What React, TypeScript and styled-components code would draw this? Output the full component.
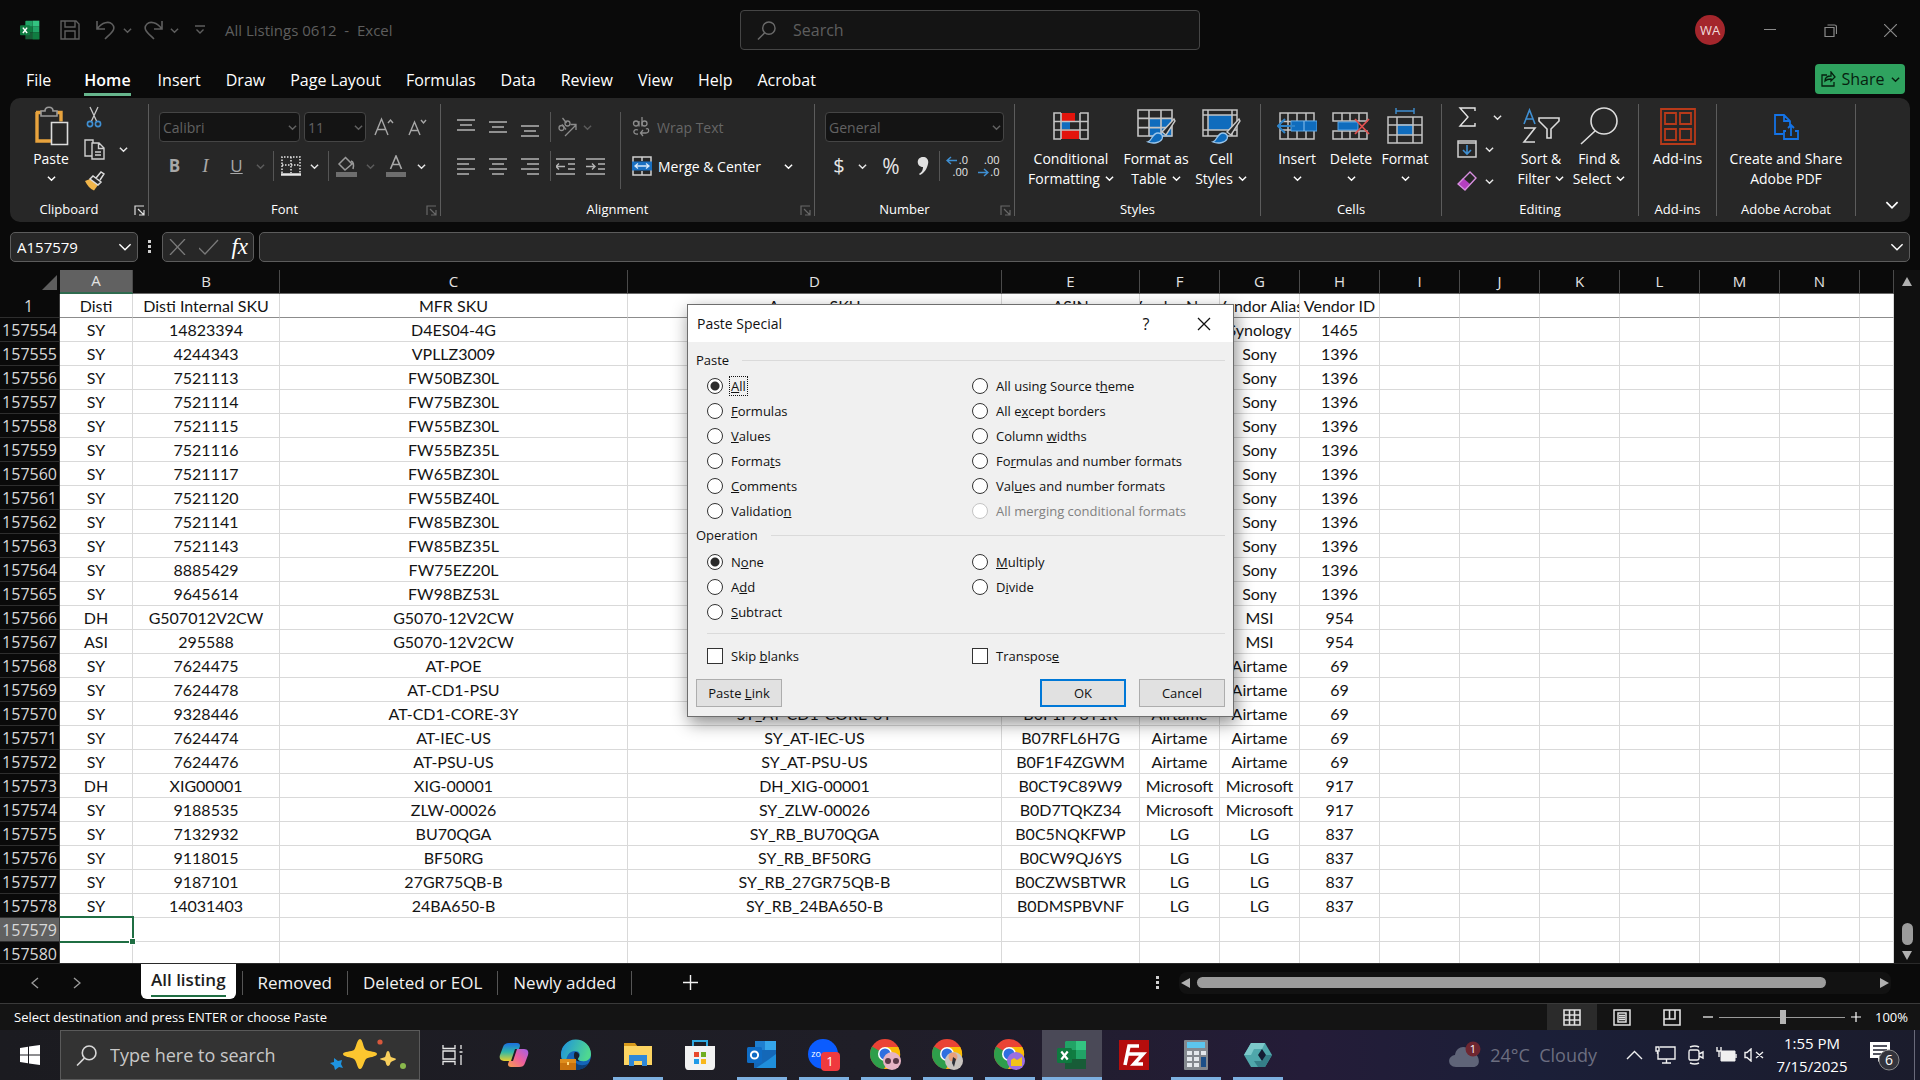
import React from "react";
import styled, { createGlobalStyle, css } from "styled-components";

const ui = '"Open Sans", "Noto Sans", sans-serif';

const GlobalStyle = createGlobalStyle`
  *, *::before, *::after { box-sizing: border-box; }
  body { margin: 0; background: #0a0a0a; font-family: ${ui}; color: #fff; overflow: hidden; }
  button, input, select { font: inherit; color: inherit; margin: 0; }
  button { background: none; border: 0; padding: 0; cursor: default; }
  svg { display: block; flex: none; }
`;

const Window = styled.div`
  display: flex;
  flex-direction: column;
  height: 100vh;
  background: #0a0a0a;
`;

/* ---------- title bar ---------- */
const TitleBar = styled.header`
  display: grid;
  grid-template-columns: 1fr 460px 1fr;
  gap: 20px;
  align-items: center;
  height: 60px;
  padding: 0 0 0 20px;
  color: #5e5e5e;
`;
const QuickAccess = styled.div`
  display: flex;
  align-items: center;
`;
const QuickButton = styled.button<{ $w: number }>`
  display: flex;
  align-items: center;
  justify-content: center;
  width: ${(p) => p.$w}px;
  height: 30px;
`;
const DocTitle = styled.h1`
  margin: 0 0 0 11px;
  font-size: 15px;
  line-height: 24px;
  font-weight: 400;
  white-space: pre;
`;
const SearchBox = styled.label`
  display: flex;
  align-items: center;
  gap: 15px;
  height: 40px;
  padding: 0 16px;
  border: 1px solid #454545;
  border-radius: 4px;
  background: #141414;
`;
const SearchInput = styled.input`
  flex: 1;
  min-width: 0;
  border: 0;
  outline: 0;
  background: none;
  font-size: 16px;
  &::placeholder { color: #5e5e5e; opacity: 1; }
`;
const WindowControls = styled.div`
  display: flex;
  align-items: center;
  justify-content: flex-end;
`;
const Avatar = styled.button`
  width: 30px;
  height: 30px;
  margin-right: 15px;
  border-radius: 50%;
  background: #a4262c;
  color: #f0dcdc;
  font-size: 13px;
`;
const ControlButton = styled.button`
  display: flex;
  align-items: center;
  justify-content: center;
  width: 60px;
  height: 40px;
`;

/* ---------- ribbon tabs ---------- */
const TabRow = styled.nav`
  display: flex;
  align-items: flex-start;
  height: 38px;
  padding: 4px 15px 0 14px;
`;
const RibbonTab = styled.button<{ $active?: boolean }>`
  height: 32px;
  padding: 0 13px 0 12px;
  font-size: 16px;
  line-height: 32px;
  ${(p) =>
    p.$active &&
    css`
      margin: 0 2px 0 8px;
      font-weight: 600;
    `}
  span {
    display: block;
    height: 32px;
    border-bottom: 3px solid ${(p) => (p.$active ? "#66b58c" : "transparent")};
  }
`;
const ShareButton = styled.button`
  display: flex;
  align-items: center;
  justify-content: center;
  gap: 6px;
  width: 90px;
  height: 30px;
  margin-left: auto;
  border-radius: 4px;
  background: #2fa35f;
  color: #06210f;
  font-size: 16px;
`;

/* ---------- ribbon ---------- */
const Ribbon = styled.section`
  display: flex;
  height: 124px;
  margin: 0 10px;
  border-radius: 10px;
  background: #272727;
`;
const Group = styled.div<{ $w: number }>`
  display: flex;
  flex-direction: column;
  flex: none;
  position: relative;
  width: ${(p) => p.$w}px;
  padding-bottom: 5px;
`;
const GroupBody = styled.div<{ $pad: number }>`
  display: flex;
  align-items: flex-start;
  flex: 1;
  padding-left: ${(p) => p.$pad}px;
`;
const GroupLabel = styled.div<{ $launch?: boolean }>`
  display: flex;
  align-items: center;
  justify-content: center;
  height: 16px;
  padding-right: ${(p) => (p.$launch ? 20 : 0)}px;
  font-size: 13px;
  line-height: 16px;
`;
const Launcher = styled.button<{ $dim?: boolean }>`
  position: absolute;
  right: 3px;
  bottom: 6px;
  color: ${(p) => (p.$dim ? "#686868" : "#e0e0e0")};
`;
const GroupRule = styled.div`
  flex: none;
  width: 1px;
  margin: 6px 0;
  background: #5c5c5c;
`;
const RibbonEnd = styled.div`
  display: flex;
  flex: 1;
  align-items: flex-end;
  justify-content: flex-end;
  padding: 0 11px 10px 0;
`;
const Stack = styled.div<{ $w?: number; $top: number; $gap?: number }>`
  display: flex;
  flex-direction: column;
  flex: none;
  width: ${(p) => (p.$w ? p.$w + "px" : "auto")};
  padding-top: ${(p) => p.$top}px;
  gap: ${(p) => p.$gap ?? 0}px;
`;
const ToolRow = styled.div<{ $h?: number }>`
  display: flex;
  align-items: center;
  height: ${(p) => p.$h ?? 30}px;
`;
const Tool = styled.button<{ $w: number; $dim?: boolean; $bright?: boolean }>`
  display: flex;
  align-items: center;
  justify-content: center;
  flex: none;
  width: ${(p) => p.$w}px;
  height: 28px;
  color: ${(p) => (p.$dim ? "#5c5c5c" : p.$bright ? "#e6e6e6" : "#a8a8a8")};
`;
const Rule = styled.div<{ $h?: number }>`
  flex: none;
  align-self: center;
  width: 1px;
  height: ${(p) => p.$h ?? 30}px;
  margin: 0 4px;
  background: #555;
`;
const TallRule = styled(Rule)`
  align-self: flex-start;
  margin-top: 14px;
`;
const SelectShell = styled.div<{ $w: number }>`
  display: grid;
  align-items: center;
  flex: none;
  width: ${(p) => p.$w}px;
  height: 30px;
  margin-right: 4px;
  color: #626262;
  > * { grid-area: 1 / 1; }
  > svg { justify-self: end; margin-right: 3px; pointer-events: none; }
`;
const RibbonSelect = styled.select`
  appearance: none;
  width: 100%;
  height: 30px;
  padding: 0 3px;
  border: 1px solid #454545;
  border-radius: 4px;
  background: #141414;
  font-size: 14px;
  color: #626262;
`;
const BigButton = styled.button<{ $w: number }>`
  display: flex;
  flex-direction: column;
  align-items: center;
  flex: none;
  width: ${(p) => p.$w}px;
  padding-top: 8px;
  font-size: 14px;
  line-height: 20px;
  white-space: nowrap;
`;
const BigIcon = styled.span`
  display: flex;
  align-items: center;
  justify-content: center;
  height: 40px;
  margin-bottom: 3px;
`;
const BigLine = styled.span`
  display: flex;
  align-items: center;
  gap: 5px;
  height: 20px;
  svg { margin-bottom: 2px; }
`;
const LabelTool = styled.button<{ $dim?: boolean }>`
  display: flex;
  align-items: center;
  gap: 6px;
  width: 168px;
  height: 30px;
  padding-left: 7px;
  font-size: 14px;
  color: ${(p) => (p.$dim ? "#666" : "#fff")};
  span { flex: 1; text-align: left; }
`;
const Glyph = styled.span<{ $size: number; $serif?: boolean; $bold?: boolean; $italic?: boolean }>`
  font-family: ${(p) => (p.$serif ? '"Liberation Serif", serif' : ui)};
  font-size: ${(p) => p.$size}px;
  line-height: 24px;
  font-weight: ${(p) => (p.$bold ? 700 : 400)};
  font-style: ${(p) => (p.$italic ? "italic" : "normal")};
`;

/* ---------- formula bar ---------- */
const FormulaRow = styled.section`
  display: flex;
  align-items: center;
  height: 48px;
  padding: 2px 10px 0;
  font-size: 16px;
`;
const FieldBox = styled.div<{ $w?: number }>`
  display: flex;
  align-items: center;
  justify-content: space-between;
  flex: ${(p) => (p.$w ? "none" : 1)};
  width: ${(p) => (p.$w ? p.$w + "px" : "auto")};
  height: 30px;
  padding: 0 5px 0 6px;
  border: 1px solid #5c5c5c;
  border-radius: 5px;
  background: #272727;
`;
const FieldInput = styled.input`
  flex: 1;
  min-width: 0;
  border: 0;
  padding: 0;
  outline: 0;
  background: none;
  font-size: 15px;
`;
const DotsHolder = styled.div<{ $w: number }>`
  display: flex;
  justify-content: center;
  flex: none;
  width: ${(p) => p.$w}px;
`;

/* ---------- sheet ---------- */
const Workspace = styled.main`
  position: relative;
  display: flex;
  flex: 1;
  min-height: 0;
`;
const SheetClip = styled.div`
  flex: 1;
  min-width: 0;
  overflow: hidden;
  background: #fff;
`;
const Grid = styled.table`
  width: 100%;
  table-layout: fixed;
  border-collapse: separate;
  border-spacing: 0;
  color: #141414;
  font-family: Lato, "Open Sans", sans-serif;
  font-size: 16px;
`;
const Corner = styled.td`
  height: 24px;
  padding: 0;
  background: #0a0a0a;
  svg { margin-left: auto; }
`;
const ColHead = styled.th<{ $on?: boolean }>`
  height: 24px;
  padding: 0 0 2px;
  border-right: 1px solid #4a4a4a;
  border-bottom: ${(p) => (p.$on ? "2px solid #2f6b4f" : "1px solid #6a6a6a")};
  background: ${(p) => (p.$on ? "#616161" : "#0a0a0a")};
  color: #e3e3e3;
  font-family: ${ui};
  font-size: 15px;
  line-height: 20px;
  font-weight: 400;
`;
const RowHead = styled.th<{ $on?: boolean }>`
  height: 24px;
  padding: 0 2px 0 0;
  border-bottom: 1px solid #2e2e2e;
  border-right: 1px solid #3a3a3a;
  background: ${(p) => (p.$on ? "#616161" : "#0a0a0a")};
  color: #d8d8d8;
  font-family: ${ui};
  font-size: 16px;
  line-height: 22px;
  font-weight: 400;
  text-align: ${(p) => (p.$on === undefined ? "center" : "right")};
`;
const Cell = styled.td<{ $frozen?: boolean; $active?: boolean }>`
  position: relative;
  height: 24px;
  padding: 0;
  border-right: 1px solid #d9d9d9;
  border-bottom: 1px solid ${(p) => (p.$frozen ? "#8c8c8c" : "#d9d9d9")};
  line-height: 23px;
  ${(p) =>
    p.$active &&
    css`
      &::after {
        content: "";
        position: absolute;
        inset: -2px -2px -2px 0;
        border: 2px solid #1f6e43;
        border-left: 0;
      }
    `}
`;
const CellText = styled.div`
  display: flex;
  justify-content: center;
  height: 23px;
  overflow: hidden;
  white-space: nowrap;
`;
const FillHandle = styled.span`
  position: absolute;
  right: -4px;
  bottom: -4px;
  z-index: 1;
  width: 7px;
  height: 7px;
  border: 1px solid #fff;
  background: #1f6e43;
`;
const VScroll = styled.div`
  display: flex;
  flex-direction: column;
  align-items: center;
  width: 26px;
  padding: 5px 0 1px;
  background: #101010;
  color: #b0b0b0;
`;
const VTrack = styled.div`
  display: flex;
  flex-direction: column;
  justify-content: flex-end;
  flex: 1;
  padding-bottom: 3px;
`;
const VThumb = styled.div`
  width: 11px;
  height: 22px;
  border-radius: 6px;
  background: #9c9c9c;
`;
const ArrowButton = styled.button`
  display: flex;
  align-items: center;
  justify-content: center;
  width: 14px;
  height: 14px;
`;

/* ---------- paste special dialog ---------- */
const Dialog = styled.section`
  position: absolute;
  top: 34px;
  left: calc(50% - 273px);
  width: 547px;
  border: 1px solid #6e6e6e;
  background: #f0f0f0;
  color: #111;
  box-shadow: 2px 6px 16px rgba(0, 0, 0, 0.45);
  font-size: 13px;
  line-height: 18px;
`;
const DialogTitle = styled.div`
  display: flex;
  align-items: center;
  height: 37px;
  padding-left: 9px;
  background: #fff;
  h2 { flex: 1; margin: 0; font-size: 14px; font-weight: 400; }
`;
const DialogButton = styled.button`
  display: flex;
  align-items: center;
  justify-content: center;
  width: 58px;
  height: 36px;
  font-size: 16px;
`;
const DialogBody = styled.div`
  padding: 9px 8px;
`;
const Fieldset = styled.fieldset`
  margin: 0 0 3px;
  padding: 0;
  border: 0;
`;
const Legend = styled.legend`
  display: flex;
  align-items: center;
  gap: 13px;
  width: 100%;
  height: 18px;
  padding: 0;
  &::after { content: ""; flex: 1; height: 1px; background: #dadada; }
`;
const Options = styled.div<{ $rows: number; $top?: number }>`
  display: grid;
  grid-auto-flow: column;
  grid-template-columns: 265px 1fr;
  grid-template-rows: repeat(${(p) => p.$rows}, 25px);
  padding: ${(p) => p.$top ?? 4}px 0 0 11px;
`;
const Option = styled.label<{ $off?: boolean }>`
  display: flex;
  align-items: center;
  gap: 7px;
  color: ${(p) => (p.$off ? "#808080" : "#111")};
`;
const OptionText = styled.span<{ $focus?: boolean }>`
  padding: 0 1px;
  outline: ${(p) => (p.$focus ? "1px dotted #111" : "none")};
`;
const Radio = styled.input<{ $off?: boolean }>`
  appearance: none;
  flex: none;
  width: 16px;
  height: 16px;
  border: 1px solid ${(p) => (p.$off ? "#c4c4c4" : "#333")};
  border-radius: 50%;
  background: #fff;
  &:checked { background: radial-gradient(circle, #2b2b2b 4px, #fff 5px); }
`;
const Check = styled.input`
  appearance: none;
  flex: none;
  width: 16px;
  height: 16px;
  border: 1px solid #333;
  background: #fff;
`;
const DialogRule = styled.div`
  height: 1px;
  margin: 9px 0 9px 11px;
  background: #dadada;
`;
const DialogActions = styled.div`
  display: flex;
  gap: 13px;
  padding-top: 11px;
`;
const ActionButton = styled.button<{ $primary?: boolean; $start?: boolean }>`
  width: 86px;
  height: 28px;
  margin-right: ${(p) => (p.$start ? "auto" : 0)};
  border: ${(p) => (p.$primary ? "2px solid #0078d7" : "1px solid #adadad")};
  background: #e1e1e1;
`;

/* ---------- sheet tabs ---------- */
const SheetTabs = styled.nav`
  display: flex;
  align-items: center;
  height: 40px;
  padding: 0 29px 2px 0;
  border-top: 1px solid #2a2a2a;
  color: #f2f2f2;
`;
const NavButton = styled.button<{ $w: number }>`
  display: flex;
  align-items: center;
  justify-content: center;
  width: ${(p) => p.$w}px;
  height: 30px;
  color: #9a9a9a;
`;
const ActiveSheet = styled.button`
  align-self: flex-start;
  height: 35px;
  margin: 0 6px 0 57px;
  padding: 0 10px;
  border-radius: 0 0 6px 6px;
  background: #fff;
  color: #1d1d1d;
  font-size: 17px;
  font-weight: 600;
  line-height: 28px;
  span {
    display: block;
    height: 31px;
    border-bottom: 2px solid #1f6e43;
  }
`;
const SheetTab = styled.button`
  height: 24px;
  padding: 0 15px;
  border-left: 1px solid #555;
  font-size: 17px;
  line-height: 24px;
`;
const AddSheet = styled.button`
  display: flex;
  align-items: center;
  justify-content: center;
  width: 118px;
  height: 24px;
  border-left: 1px solid #555;
`;
const HScroll = styled.div`
  display: flex;
  align-items: center;
  gap: 4px;
  width: 712px;
  height: 22px;
  border-radius: 8px;
  background: #121212;
  color: #b0b0b0;
`;
const HTrack = styled.div`
  flex: 1;
`;
const HThumb = styled.div`
  width: 93%;
  height: 11px;
  border-radius: 6px;
  background: #9c9c9c;
`;
const Spacer = styled.div`
  flex: 1;
`;

/* ---------- status bar ---------- */
const StatusBar = styled.footer`
  display: flex;
  align-items: center;
  height: 27px;
  padding: 0 12px 0 14px;
  border-top: 1px solid #3a3a3a;
  background: #141414;
  font-size: 13px;
`;
const ViewButtons = styled.div`
  display: flex;
  margin-right: 4px;
`;
const ViewButton = styled.button<{ $on?: boolean }>`
  display: flex;
  align-items: center;
  justify-content: center;
  width: 50px;
  height: 26px;
  color: #e0e0e0;
  background: ${(p) => (p.$on ? "#2b2b2b" : "transparent")};
`;
const ZoomSlider = styled.input`
  appearance: none;
  width: 126px;
  height: 14px;
  margin: 0 4px;
  background: linear-gradient(#9a9a9a, #9a9a9a) center / 100% 1px no-repeat;
  &::-webkit-slider-thumb {
    appearance: none;
    width: 6px;
    height: 14px;
    background: #b4b4b4;
  }
`;
const ZoomStep = styled.button`
  width: 14px;
  height: 20px;
  display: flex;
  align-items: center;
  justify-content: center;
`;
const ZoomValue = styled.span`
  width: 45px;
  text-align: right;
`;

/* ---------- taskbar ---------- */
const Taskbar = styled.footer`
  display: flex;
  height: 50px;
  background: linear-gradient(90deg, #1b1b20 0%, #1f1e27 45%, #241c38 68%, #1b1f38 80%, #1b1c2c 100%);
`;
const StartButton = styled.button`
  display: flex;
  align-items: center;
  justify-content: center;
  width: 60px;
`;
const TaskSearch = styled.label`
  display: flex;
  align-items: center;
  gap: 13px;
  width: 360px;
  padding: 0 12px 0 15px;
  border: 1px solid #5a5a5a;
  background: #333;
`;
const TaskInput = styled.input`
  flex: 1;
  min-width: 0;
  padding: 0;
  border: 0;
  outline: 0;
  background: none;
  font-size: 18px;
  &::placeholder { color: #c8c8c8; opacity: 1; }
`;
const TaskApps = styled.div`
  display: flex;
  gap: 12px;
  padding-left: 7px;
`;
const TaskApp = styled.button<{ $open?: boolean; $on?: boolean }>`
  display: flex;
  align-items: center;
  justify-content: center;
  width: ${(p) => (p.$on ? 60 : 50)}px;
  margin: 0 ${(p) => (p.$on ? -5 : 0)}px;
  border-bottom: 3px solid ${(p) => (p.$open ? "#7db0e0" : "transparent")};
  border-top: 3px solid transparent;
  background: ${(p) => (p.$on ? "#4a4957" : "transparent")};
`;
const Tray = styled.div`
  display: flex;
  align-items: center;
  margin-left: auto;
`;
const Weather = styled.button`
  display: flex;
  align-items: center;
  gap: 9px;
  margin-right: 19px;
  color: #6c6e80;
  font-size: 18px;
  white-space: pre;
`;
const TrayIcon = styled.button<{ $w: number }>`
  display: flex;
  align-items: center;
  justify-content: center;
  width: ${(p) => p.$w}px;
  height: 50px;
`;
const Clock = styled.button`
  width: 86px;
  font-size: 15px;
  line-height: 23px;
`;
const Notify = styled.button`
  display: flex;
  align-items: center;
  justify-content: center;
  width: 60px;
  height: 50px;
  border-right: 1px solid #6a6a7a;
  margin-right: 5px;
`;

/* ---------- icons ---------- */
const Chevron = ({ s = 9, w = 1.6 }: { s?: number; w?: number }) => (
  <svg width={s} height={s} viewBox="0 0 10 10" fill="none" stroke="currentColor" strokeWidth={w}>
    <path d="M1 3l4 4 4-4" />
  </svg>
);
const Stroke = ({ w, h, d, sw = 1.4, color = "currentColor" }: { w: number; h: number; d: string; sw?: number; color?: string }) => (
  <svg width={w} height={h} viewBox={`0 0 ${w} ${h}`} fill="none" stroke={color} strokeWidth={sw}>
    <path d={d} />
  </svg>
);
const Dots = () => (
  <svg width="4" height="14" viewBox="0 0 4 14" fill="#d0d0d0">
    <path d="M0 0h3v3H0zM0 5h3v3H0zM0 10h3v3H0z" />
  </svg>
);
const ExcelLogo = ({ s, back = true }: { s: number; back?: boolean }) => (
  <svg width={s} height={s} viewBox="0 0 30 30">
    <path d="M9 1h10v9H8V2z" fill="#21a366" />
    <path d="M19 1h10v9H19z" fill="#33c481" />
    <path d="M8 10h11v9H8z" fill="#107c41" />
    <path d="M19 10h10v9H19z" fill="#21a366" />
    <path d="M8 19h21v10H8z" fill="#185c37" />
    <path d="M19 19h10v10H19z" fill={back ? "#107c41" : "#185c37"} />
    <rect y="8" width="15" height="15" rx="1.5" fill="#0f7a40" />
    <path d="M4.300 11.500l6.400 8M10.700 11.500l-6.400 8" stroke="#fff" strokeWidth="2.200" />
  </svg>
);
const LauncherIcon = () => <Stroke w={11} h={11} d="M1 10V1h9M4 4l6 6M10 5v5H5" sw={1.2} />;
const PasteIcon = () => (
  <svg width="36" height="40" viewBox="0 0 36 40" fill="none">
    <path d="M4 6v29h14M3 6.500h25v9" stroke="#e8a33d" strokeWidth="3.400" />
    <path d="M8 10V5h4c0-5 8-5 8 0h4v5z" fill="#272727" stroke="#9a9a9a" strokeWidth="1.600" />
    <path d="M18.500 16.500h16v22h-16z" fill="#272727" stroke="#dcdcdc" strokeWidth="1.600" />
  </svg>
);
const CutIcon = () => (
  <svg width="16" height="22" viewBox="0 0 16 22" fill="none">
    <path d="M4 1l7 15M12 1L5 16" stroke="#c8c8c8" strokeWidth="1.300" />
    <circle cx="4" cy="18" r="2.600" stroke="#3f8fd2" strokeWidth="1.600" />
    <circle cx="12" cy="18" r="2.600" stroke="#3f8fd2" strokeWidth="1.600" />
  </svg>
);
const CopyIcon = () => <Stroke w={21} h={21} d="M8 17H1V1h8v3M8 4h7l5 5v11H8zM14.500 4v5.500H20M11 13h6M11 16h6" color="#d0d0d0" />;
const PainterIcon = () => (
  <svg width="21" height="20" viewBox="0 0 21 20">
    <path d="M1 10l5-2 8 6-4 5.500C6 18 3 14 1 10z" fill="#f0b54a" />
    <path d="M6 8l3-3 8 6-3 3zM12 7l5-6 3 2-4 6" fill="#272727" stroke="#dcdcdc" strokeWidth="1.500" />
  </svg>
);
const BordersIcon = () => (
  <svg width="20" height="20" viewBox="0 0 20 20" fill="none">
    <path d="M1 17V1h18v16M10 1v16M1 9h18" stroke="#e8e8e8" strokeWidth="1.500" strokeDasharray="1.500 1.500" />
    <path d="M0 18.500h20" stroke="#e8e8e8" strokeWidth="2.500" />
  </svg>
);
const FillIcon = () => (
  <svg width="21" height="22" viewBox="0 0 21 22" fill="none">
    <path d="M9 2l7 7-7 6-6-6 6-6M15 6c3 1 3 4 2 8" stroke="#9a9a9a" strokeWidth="1.500" />
    <path d="M0 17h21v5H0z" fill="#6e6e6e" />
  </svg>
);
const FontColorIcon = () => (
  <svg width="20" height="22" viewBox="0 0 20 22" fill="none">
    <path d="M4.500 14L10 1l5.500 13M6.500 9.500h7" stroke="#a8a8a8" strokeWidth="1.600" />
    <path d="M0 17h20v5H0z" fill="#6e6e6e" />
  </svg>
);
const Lines = ({ rows }: { rows: number[][] }) => (
  <svg width="18" height="19" viewBox="0 0 18 19" stroke="#b4b4b4" strokeWidth="1.500">
    {rows.map(([x1, x2, y]) => (
      <path key={y} d={`M${x1} ${y}H${x2}`} />
    ))}
  </svg>
);
const OrientIcon = () => (
  <svg width="21" height="20" viewBox="0 0 21 20" fill="none" stroke="#8c8c8c" strokeWidth="1.300">
    <path d="M8 19L19 8M19 13V7.500h-5.500" />
    <circle cx="4.500" cy="11" r="2.500" />
    <path d="M5 7.500l4 5" />
    <circle cx="10.500" cy="6.500" r="2.500" />
    <path d="M5.500 1l4 5" />
  </svg>
);
const WrapIcon = () => (
  <svg width="19" height="20" viewBox="0 0 19 20" fill="none" stroke="#8c8c8c" strokeWidth="1.300">
    <circle cx="4" cy="6.500" r="2.500" />
    <path d="M7 4v5.500" />
    <circle cx="12.500" cy="6.500" r="2.500" />
    <path d="M10 0v9.500M6 13c-5-2-6 5 0 4M9 16h5c4 0 3-6 0-4M11 13l-2.500 3 2.500 3" />
  </svg>
);
const MergeIcon = () => (
  <svg width="20" height="20" viewBox="0 0 20 20" fill="none">
    <path d="M1 1h18v18H1zM10 1v4M10 15v4" stroke="#d0d0d0" strokeWidth="1.500" />
    <path d="M0 5.500h20v9H0z" fill="#1a6fc0" />
    <path d="M3 10h14M6 7.500L3 10l3 2.500M14 7.500l3 2.500-3 2.500" stroke="#d6e8f8" strokeWidth="1.300" />
  </svg>
);
const IndentIcon = ({ right }: { right?: boolean }) => (
  <svg width="19" height="19" viewBox="0 0 19 19" fill="none" stroke="#b4b4b4" strokeWidth="1.400">
    <path d="M0 2h19M12 7h7M12 12h7M0 17h19" />
    <path d={right ? "M0 9.500h9M6 6.500l3 3-3 3" : "M0 9.500h9M3 6.500l-3 3 3 3"} />
  </svg>
);
const DecimalBox = styled.span`
  display: grid;
  grid-template-columns: 8px 14px;
  align-items: center;
  width: 22px;
  font-size: 11px;
  line-height: 12px;
`;
const DecimalDigits = styled.span<{ $wide?: boolean }>`
  grid-column: ${(p) => (p.$wide ? "1 / 3" : "2")};
  text-align: right;
`;
const DecimalArrow = ({ right }: { right?: boolean }) => (
  <Stroke w={11} h={9} d={right ? "M0 4.500h10M6 1l4 3.500L6 8" : "M1 4.500h10M5 1L1 4.500 5 8"} color="#3f8fd2" sw={1.5} />
);
const DecimalIcon = ({ less }: { less?: boolean }) =>
  less ? (
    <DecimalBox>
      <DecimalDigits $wide>.00</DecimalDigits>
      <DecimalArrow right />
      <DecimalDigits>.0</DecimalDigits>
    </DecimalBox>
  ) : (
    <DecimalBox>
      <DecimalArrow />
      <DecimalDigits>.0</DecimalDigits>
      <DecimalDigits $wide>.00</DecimalDigits>
    </DecimalBox>
  );
const CellsBase = ({ w = 36, h = 28 }: { w?: number; h?: number }) => (
  <path d={`M1 1h${w - 2}v${h - 2}H1zM1 ${h / 3}h${w - 2}M1 ${(h * 2) / 3}h${w - 2}M${w / 3} 1v${h - 2}M${(w * 2) / 3} 1v${h - 2}`} stroke="#c4c4c4" strokeWidth="1.600" fill="none" />
);
const CondIcon = () => (
  <svg width="36" height="28" viewBox="0 0 36 28">
    <path d="M8 1h14v8H8z" fill="#e3140c" />
    <path d="M8 10h9v7H8z" fill="#0f6cbd" />
    <path d="M8 18h18v9H8z" fill="#e3140c" />
    <path d="M8 1H1v26h7M27 1h8v26h-8M1 9.500h34M1 18h34M8 1v26M27 1v26" stroke="#c4c4c4" strokeWidth="1.600" fill="none" />
  </svg>
);
const BrushOverlay = () => (
  <g>
    <path d="M37 10L25 23l4 3 9-14z" fill="#272727" stroke="#c8c8c8" strokeWidth="1.400" />
    <path d="M11 33c4-1 4-9 10-9 4 0 5 3 4 6-2 4-9 5-14 3z" fill="#0f6cbd" stroke="#9cc7ec" strokeWidth="1.300" />
  </g>
);
const TableIcon = () => (
  <svg width="39" height="35" viewBox="0 0 39 35">
    <path d="M12 10h23v18H12z" fill="#0f6cbd" />
    <CellsBase />
    <BrushOverlay />
  </svg>
);
const StylesIcon = () => (
  <svg width="39" height="35" viewBox="0 0 39 35">
    <path d="M6 6h24v15H6z" fill="#0f6cbd" />
    <path d="M1 1h34v26H1zM1 6h34M1 21h34M6 1v26M30 1v26" stroke="#c4c4c4" strokeWidth="1.500" fill="none" />
    <BrushOverlay />
  </svg>
);
const InsertIcon = () => (
  <svg width="40" height="30" viewBox="0 0 40 30">
    <g transform="translate(2 1)">
      <path d="M1 1h34v26H1zM1 9.500h34M1 18h34M9 1v26M18 1v26M27 1v26" stroke="#c4c4c4" strokeWidth="1.500" fill="none" />
    </g>
    <path d="M14 10h26v10H14z" fill="#0f6cbd" stroke="#5aa5e4" />
    <path d="M27 10v10" stroke="#8cc2ee" />
    <path d="M1 15h17M8 8l-7 7 7 7" stroke="#2f83c8" strokeWidth="2" fill="none" />
  </svg>
);
const DeleteIcon = () => (
  <svg width="38" height="30" viewBox="0 0 38 30">
    <path d="M1 2h34v8H1zM1 20h34v8H1zM10 2v8M18 2v8M27 2v8M10 20v8M18 20v8M27 20v8" stroke="#c4c4c4" strokeWidth="1.500" fill="none" />
    <path d="M6 11h20v8H6z" fill="#0f6cbd" stroke="#5aa5e4" />
    <path d="M23 8l14 15M37 8L23 23" stroke="#e0504f" strokeWidth="1.800" />
  </svg>
);
const FormatIcon = () => (
  <svg width="36" height="36" viewBox="0 0 36 36">
    <path d="M9 3h18M9 0v6M27 0v6" stroke="#3f8fd2" strokeWidth="1.400" />
    <path d="M10 16h16v11H10z" fill="#0f6cbd" />
    <g transform="translate(0 8)"><path d="M1 1h34v26H1zM1 9h34M1 19h34M10 1v26M26 1v26" stroke="#c4c4c4" strokeWidth="1.500" fill="none" /></g>
  </svg>
);
const SortIcon = () => (
  <svg width="38" height="36" viewBox="0 0 38 36" fill="none">
    <path d="M2 16L7.500 2 13 16M4 11h7" stroke="#3f8fd2" strokeWidth="1.600" />
    <path d="M2 20h11L2 34h11" stroke="#dcdcdc" strokeWidth="1.600" />
    <path d="M17 10h20v3l-8 8v9h-4v-9l-8-8z" stroke="#dcdcdc" strokeWidth="1.600" />
  </svg>
);
const FindIcon = () => <Stroke w={38} h={38} d="M24 1a13 13 0 1 1 0 26a13 13 0 1 1 0-26zM15 24L1 37" color="#dcdcdc" sw={1.6} />;
const AddinsIcon = () => <Stroke w={36} h={37} d="M1 1h34v35H1zM5 5h11v11H5zM20 5h11v11H20zM5 21h11v11H5zM20 21h11v11H20z" color="#b83a1a" sw={1.8} />;
const AdobeIcon = () => <Stroke w={26} h={27} d="M10 21H2V2h9l6 6v5M11 2v6h6M13 18h-2v8h14v-8h-3M18 23V12M15 15l3-3 3 3" color="#1473e6" sw={1.8} />;
const Magnifier = ({ s, c }: { s: number; c: string }) => (
  <svg width={s} height={s} viewBox="0 0 20 20" fill="none" stroke={c} strokeWidth="1.500">
    <circle cx="12.500" cy="7.500" r="6.500" />
    <path d="M8 12.500L1 19.500" />
  </svg>
);
const Chrome = ({ badge }: { badge: "a" | "b" | "c" }) => (
  <svg width="34" height="34" viewBox="0 0 34 34">
    <circle cx="16" cy="16" r="15" fill="#ea4335" />
    <path d="M16 16L3 8.500A15 15 0 0 0 15 31l7-11z" fill="#2e9e4b" />
    <path d="M16 9h13.300A15 15 0 0 1 15 31l7-11z" fill="#fbbc05" />
    <circle cx="16" cy="16" r="7" fill="#fff" />
    <circle cx="16" cy="16" r="5.500" fill="#2f6fe0" />
    <circle cx="23" cy="23" r="9" fill={badge === "a" ? "#e6b4c4" : badge === "b" ? "#c9c4c0" : "#9a6fe0"} />
    {badge === "a" && <g fill="#5a3a48"><circle cx="19" cy="23" r="3" /><circle cx="27" cy="23" r="3" /></g>}
    {badge === "b" && <g><circle cx="22" cy="19" r="4.500" fill="#e8a07c" /><path d="M22 19l3 2-2 8-2-4z" fill="#2d3038" /></g>}
    {badge === "c" && <path d="M18 22l3-2 3 2 5-3v9H18z" fill="#f2c318" />}
  </svg>
);
const Sparkles = () => (
  <svg width="78" height="34" viewBox="0 0 78 34">
    <path d="M31 1c3 0 3 9 6 11s11 1 11 4-9 3-11 5-3 10-6 10-3-8-6-10-11-2-11-5 9-2 11-4 3-11 6-11z" fill="#fcc62f" />
    <path d="M59 13c2 0 2 5 3 6s5 1 5 2-4 2-5 3-1 4-3 4-2-4-3-5-5-1-5-2 4-1 5-2 1-6 3-6z" fill="#f8cf5c" />
    <path d="M5 20l4 3 4-1-1 4 2 4-4-1-4 3-1-4-4-3 4-1z" fill="#1f94e0" />
    <circle cx="51" cy="4" r="2.600" fill="#d8583c" />
    <circle cx="74" cy="28" r="3" fill="#8ab84c" />
  </svg>
);
const Copilot = () => (
  <svg width="30" height="28" viewBox="0 0 30 28">
    <defs>
      <linearGradient id="cp1" x1="0" y1="0" x2="0" y2="1"><stop offset="0" stopColor="#1b6fe0" /><stop offset=".5" stopColor="#2fb7a8" /><stop offset="1" stopColor="#e8d02c" /></linearGradient>
      <linearGradient id="cp2" x1="1" y1="0" x2="0" y2="1"><stop offset="0" stopColor="#a060e8" /><stop offset=".5" stopColor="#ee5f9c" /><stop offset="1" stopColor="#f7a04c" /></linearGradient>
    </defs>
    <path d="M10 2h8c2 0 3 1 3 3l-1 3h-4l-4 12H5c-4 0-5-3-4-6l3-8c1-3 3-4 6-4z" fill="url(#cp1)" />
    <path d="M20 26h-8c-2 0-3-1-3-3l1-3h4l4-12h7c4 0 5 3 4 6l-3 8c-1 3-3 4-6 4z" fill="url(#cp2)" />
  </svg>
);
const Edge = () => (
  <svg width="32" height="32" viewBox="0 0 32 32">
    <defs>
      <linearGradient id="ed1" x1="0" y1="0" x2="1" y2=".3"><stop offset="0" stopColor="#1d8fe0" /><stop offset="1" stopColor="#4fd890" /></linearGradient>
    </defs>
    <circle cx="16" cy="16" r="15" fill="#1565b8" />
    <path d="M1 16A15 15 0 0 1 31 15c0 5-4 8-9 7-4 0-5-2-3-4 2-3 0-6-4-6-6 0-9 5-9 12C3 22 1 19 1 16z" fill="url(#ed1)" />
    <path d="M15 13c3 0 5 2 4 5-2 2-1 4 2 4-3 1-7-1-7-5 0-2 0-3 1-4z" fill="#17202c" />
    <path d="M16 24c3 3 9 3 13 0-3 5-8 7-13 7z" fill="#0d3f78" />
    <path d="M0 20h16v11H0z" fill="#c8720e" />
    <path d="M0 20h16v4H0z" fill="#de8c1c" />
    <path d="M7 23h2v3H7z" fill="#ffd77a" />
  </svg>
);
const Explorer = () => (
  <svg width="28" height="26" viewBox="0 0 28 26">
    <path d="M0 1h11l3 4H0z" fill="#d89a1c" />
    <path d="M0 4h28v19H0z" fill="#fcd462" />
    <path d="M5 24V13h18v11h-5v-5h-8v5z" fill="#2f88d8" />
  </svg>
);
const Store = () => (
  <svg width="30" height="30" viewBox="0 0 30 30">
    <path d="M8 6V1h14v5" fill="none" stroke="#2fa8e0" strokeWidth="2" />
    <path d="M0 6h30v20c0 2-1 4-3 4H3c-2 0-3-2-3-4z" fill="#f2f2f2" />
    <path d="M9 12h5v5H9z" fill="#e8482c" /><path d="M16 12h5v5h-5z" fill="#6fae1f" />
    <path d="M9 19h5v5H9z" fill="#1f9ae8" /><path d="M16 19h5v5h-5z" fill="#f8b71c" />
  </svg>
);
const Outlook = () => (
  <svg width="30" height="28" viewBox="0 0 30 28">
    <path d="M8 0h21v9H8z" fill="#1f7fd0" /><path d="M18 0h11v9H18z" fill="#35a5ea" />
    <path d="M7 9h22v18H7z" fill="#1468b8" /><path d="M29 13v14H9l12-8z" fill="#1f8fdc" />
    <rect y="6" width="15" height="16" rx="1.500" fill="#0f6cc4" />
    <circle cx="7.500" cy="14" r="3.600" fill="none" stroke="#fff" strokeWidth="2" />
  </svg>
);
const BadgeText = styled.text<{ $s: number }>`
  font-family: ${ui};
  font-size: ${(p) => p.$s}px;
  fill: #fff;
  text-anchor: middle;
`;
const Zoom = () => (
  <svg width="34" height="34" viewBox="0 0 34 34">
    <circle cx="16" cy="16" r="15" fill="#0b5cff" />
    <BadgeText $s={9} x="9" y="19">zo</BadgeText>
    <rect x="14" y="14" width="19" height="19" rx="4" fill="#f03a3e" />
    <BadgeText $s={13} x="23" y="28">1</BadgeText>
  </svg>
);
const FileZilla = () => (
  <svg width="30" height="30" viewBox="0 0 30 30">
    <rect width="30" height="30" fill="#b50d0d" />
    <path d="M6 25L10 6h10M8 14h8M14 14h10L15 24h9" stroke="#fff" strokeWidth="3.600" fill="none" />
  </svg>
);
const Calculator = () => (
  <svg width="24" height="30" viewBox="0 0 24 30">
    <rect width="24" height="30" rx="1" fill="#84898f" />
    <path d="M3 2h18v6H3z" fill="#5cc6ee" />
    <path d="M3 11h5v4H3zM10 11h5v4h-5zM17 11h5v4h-5zM3 17h5v4H3zM10 17h5v4h-5zM3 23h5v4H3zM10 23h5v4h-5z" fill="#e4e8ec" />
    <path d="M17 17h5v10h-5z" fill="#1c4f88" />
  </svg>
);
const Hex = () => (
  <svg width="28" height="26" viewBox="0 0 28 26">
    <path d="M7 1h14l7 12-7 12H7L0 13z" fill="#4fa7ab" />
    <path d="M7 1h14l-3 6h-8l-3 6H0z" fill="#7cc8ca" />
    <path d="M14 25h7l7-12h-6l-4 6h-8z" fill="#357f88" />
    <path d="M18 7l4 6-4 6-4-6z" fill="#141d33" />
  </svg>
);
const Triangle = ({ d }: { d: string }) => (
  <svg width="12" height="12" viewBox="0 0 12 12" fill="currentColor"><path d={d} /></svg>
);

/* ---------- data ---------- */
const columns: [string, number][] = [
  ["A", 73], ["B", 147], ["C", 348], ["D", 374], ["E", 138], ["F", 80], ["G", 80], ["H", 80],
  ["I", 80], ["J", 80], ["K", 80], ["L", 80], ["M", 80], ["N", 80],
];
const headings = ["Disti", "Disti Internal SKU", "MFR SKU", "Amazon SKU", "ASIN", "Vendor Name", "Vendor Alias", "Vendor ID"];
const sony = (a: string, b: string) => ["SY", a, b, "", "", "", "Sony", "1396"];
const rows: string[][] = [
  ["SY", "14823394", "D4ES04-4G", "", "", "", "Synology", "1465"],
  sony("4244343", "VPLLZ3009"),
  sony("7521113", "FW50BZ30L"),
  sony("7521114", "FW75BZ30L"),
  sony("7521115", "FW55BZ30L"),
  sony("7521116", "FW55BZ35L"),
  sony("7521117", "FW65BZ30L"),
  sony("7521120", "FW55BZ40L"),
  sony("7521141", "FW85BZ30L"),
  sony("7521143", "FW85BZ35L"),
  sony("8885429", "FW75EZ20L"),
  sony("9645614", "FW98BZ53L"),
  ["DH", "G507012V2CW", "G5070-12V2CW", "", "", "", "MSI", "954"],
  ["ASI", "295588", "G5070-12V2CW", "", "", "", "MSI", "954"],
  ["SY", "7624475", "AT-POE", "", "", "", "Airtame", "69"],
  ["SY", "7624478", "AT-CD1-PSU", "", "", "", "Airtame", "69"],
  ["SY", "9328446", "AT-CD1-CORE-3Y", "SY_AT-CD1-CORE-3Y", "B0F1F98T1R", "Airtame", "Airtame", "69"],
  ["SY", "7624474", "AT-IEC-US", "SY_AT-IEC-US", "B07RFL6H7G", "Airtame", "Airtame", "69"],
  ["SY", "7624476", "AT-PSU-US", "SY_AT-PSU-US", "B0F1F4ZGWM", "Airtame", "Airtame", "69"],
  ["DH", "XIG00001", "XIG-00001", "DH_XIG-00001", "B0CT9C89W9", "Microsoft", "Microsoft", "917"],
  ["SY", "9188535", "ZLW-00026", "SY_ZLW-00026", "B0D7TQKZ34", "Microsoft", "Microsoft", "917"],
  ["SY", "7132932", "BU70QGA", "SY_RB_BU70QGA", "B0C5NQKFWP", "LG", "LG", "837"],
  ["SY", "9118015", "BF50RG", "SY_RB_BF50RG", "B0CW9QJ6YS", "LG", "LG", "837"],
  ["SY", "9187101", "27GR75QB-B", "SY_RB_27GR75QB-B", "B0CZWSBTWR", "LG", "LG", "837"],
  ["SY", "14031403", "24BA650-B", "SY_RB_24BA650-B", "B0DMSPBVNF", "LG", "LG", "837"],
  [],
  [],
];
const firstRow = 157554;
const activeRow = 157579;
const allCols = Array.from({ length: 15 }, (_, i) => i);
const tabs = ["File", "Home", "Insert", "Draw", "Page Layout", "Formulas", "Data", "Review", "View", "Help", "Acrobat"];

/* An underscore marks the access key that follows it. */
const pasteOptions = [
  "_All", "_Formulas", "_Values", "Forma_ts", "_Comments", "Validatio_n",
  "All using Source t_heme", "All e_xcept borders", "Column _widths", "Fo_rmulas and number formats", "Val_ues and number formats", "All mer_ging conditional formats",
];
const operationOptions = ["N_one", "A_dd", "_Subtract", "_Multiply", "D_ivide"];

const Mnemonic = ({ text }: { text: string }) => {
  const i = text.indexOf("_");
  return (
    <>
      {text.slice(0, i)}
      <u>{text[i + 1]}</u>
      {text.slice(i + 2)}
    </>
  );
};

const RadioSet = ({ name, items, n, top }: { name: string; items: string[]; n: number; top?: number }) => (
  <Options $rows={n} $top={top}>
    {items.map((t, i) => {
      const off = t.includes("mer_ging");
      return (
        <Option key={t} $off={off}>
          <Radio type="radio" name={name} defaultChecked={i === 0} disabled={off} $off={off} />
          <OptionText $focus={t === "_All"}><Mnemonic text={t} /></OptionText>
        </Option>
      );
    })}
  </Options>
);

const RibbonGroup = ({ label, w, pad = 0, launch, children }: { label: string; w: number; pad?: number; launch?: "on" | "dim"; children: React.ReactNode }) => (
  <>
    <Group $w={w}>
      <GroupBody $pad={pad}>{children}</GroupBody>
      <GroupLabel $launch={!!launch}>{label}</GroupLabel>
      {launch && <Launcher $dim={launch === "dim"} aria-label={`${label} settings`}><LauncherIcon /></Launcher>}
    </Group>
    <GroupRule />
  </>
);

const Big = ({ w, icon, a, b, drop }: { w: number; icon: React.ReactNode; a: string; b?: string; drop?: boolean }) => (
  <BigButton $w={w}>
    <BigIcon>{icon}</BigIcon>
    <BigLine>{a}</BigLine>
    {(b || drop) && <BigLine>{b}{drop && <Chevron />}</BigLine>}
  </BigButton>
);

const Drop = ({ w, dim }: { w: number; dim?: boolean }) => (
  <Tool $w={w} $dim={dim} $bright={!dim} aria-label="More options"><Chevron /></Tool>
);

const PasteSpecial = () => (
  <Dialog role="dialog" aria-label="Paste Special">
    <DialogTitle>
      <h2>Paste Special</h2>
      <DialogButton>?</DialogButton>
      <DialogButton aria-label="Close"><Stroke w={14} h={14} d="M1 1l12 12M13 1L1 13" sw={1.3} /></DialogButton>
    </DialogTitle>
    <DialogBody>
      <Fieldset>
        <Legend>Paste</Legend>
        <RadioSet name="paste" items={pasteOptions} n={6} top={4} />
      </Fieldset>
      <Fieldset>
        <Legend>Operation</Legend>
        <RadioSet name="operation" items={operationOptions} n={3} top={5} />
      </Fieldset>
      <DialogRule />
      <Options $rows={1} $top={0}>
        <Option><Check type="checkbox" /><OptionText><Mnemonic text="Skip _blanks" /></OptionText></Option>
        <Option><Check type="checkbox" /><OptionText><Mnemonic text="Transpos_e" /></OptionText></Option>
      </Options>
      <DialogActions>
        <ActionButton $start><Mnemonic text="Paste _Link" /></ActionButton>
        <ActionButton $primary>OK</ActionButton>
        <ActionButton>Cancel</ActionButton>
      </DialogActions>
    </DialogBody>
  </Dialog>
);

const RibbonBar = () => (
  <Ribbon>
    <RibbonGroup label="Clipboard" w={138} pad={10} launch="on">
      <Big w={62} icon={<PasteIcon />} a="Paste" drop />
      <Stack $top={3}>
        <ToolRow $h={32}><Tool $w={24} aria-label="Cut"><CutIcon /></Tool></ToolRow>
        <ToolRow $h={32}><Tool $w={24} aria-label="Copy"><CopyIcon /></Tool><Drop w={34} /></ToolRow>
        <ToolRow $h={32}><Tool $w={24} aria-label="Format Painter"><PainterIcon /></Tool></ToolRow>
      </Stack>
    </RibbonGroup>
    <RibbonGroup label="Font" w={291} pad={10} launch="dim">
      <Stack $top={14} $gap={9}>
        <ToolRow>
          <SelectShell $w={141}>
            <RibbonSelect aria-label="Font"><option>Calibri</option></RibbonSelect>
            <Chevron />
          </SelectShell>
          <SelectShell $w={62}>
            <RibbonSelect aria-label="Font size"><option>11</option></RibbonSelect>
            <Chevron />
          </SelectShell>
          <Tool $w={28} aria-label="Increase font size"><Stroke w={20} h={20} d="M1 18L7.500 2 14 18M3.500 12.500h8M14 6l2.500-3L19 6" /></Tool>
          <Tool $w={40} aria-label="Decrease font size"><Stroke w={20} h={20} d="M1 18L6.500 5 12 18M3 13.500h7M13 3l2.500 3L18 3" /></Tool>
        </ToolRow>
        <ToolRow>
          <Tool $w={31}><Glyph $size={17} $bold>B</Glyph></Tool>
          <Tool $w={31}><Glyph $size={19} $serif $italic>I</Glyph></Tool>
          <Tool $w={31}><Glyph $size={17}><u>U</u></Glyph></Tool>
          <Drop w={17} dim />
          <Rule />
          <Tool $w={26} aria-label="Borders"><BordersIcon /></Tool>
          <Drop w={20} />
          <Rule />
          <Tool $w={26} aria-label="Fill color"><FillIcon /></Tool>
          <Drop w={22} dim />
          <Tool $w={30} aria-label="Font color"><FontColorIcon /></Tool>
          <Drop w={20} />
        </ToolRow>
      </Stack>
    </RibbonGroup>
    <RibbonGroup label="Alignment" w={373} pad={9} launch="dim">
      <Stack $w={166} $top={14} $gap={9}>
        <ToolRow>
          <Tool $w={32} aria-label="Top align"><Lines rows={[[0, 18, 2], [3, 15, 7], [0, 18, 12]]} /></Tool>
          <Tool $w={32} aria-label="Middle align"><Lines rows={[[0, 18, 4], [3, 15, 9], [0, 18, 14]]} /></Tool>
          <Tool $w={32} aria-label="Bottom align"><Lines rows={[[0, 18, 8], [3, 15, 13], [0, 18, 18]]} /></Tool>
          <Rule />
          <Tool $w={24} aria-label="Orientation"><OrientIcon /></Tool>
          <Drop w={16} dim />
        </ToolRow>
        <ToolRow>
          <Tool $w={32} aria-label="Align left"><Lines rows={[[0, 18, 2], [0, 12, 7], [0, 18, 12], [0, 12, 17]]} /></Tool>
          <Tool $w={32} aria-label="Center"><Lines rows={[[0, 18, 2], [3, 15, 7], [0, 18, 12], [3, 15, 17]]} /></Tool>
          <Tool $w={32} aria-label="Align right"><Lines rows={[[0, 18, 2], [6, 18, 7], [0, 18, 12], [6, 18, 17]]} /></Tool>
          <Rule />
          <Tool $w={20} aria-label="Decrease indent"><IndentIcon /></Tool>
          <Tool $w={41} aria-label="Increase indent"><IndentIcon right /></Tool>
        </ToolRow>
      </Stack>
      <TallRule $h={77} />
      <Stack $top={14} $gap={9}>
        <LabelTool $dim><WrapIcon /><span>Wrap Text</span></LabelTool>
        <LabelTool><MergeIcon /><span>Merge &amp; Center</span><Chevron /></LabelTool>
      </Stack>
    </RibbonGroup>
    <RibbonGroup label="Number" w={199} pad={10} launch="dim">
      <Stack $top={14} $gap={9}>
        <SelectShell $w={179}>
          <RibbonSelect aria-label="Number format"><option>General</option></RibbonSelect>
          <Chevron />
        </SelectShell>
        <ToolRow>
          <Tool $w={28} $bright><Glyph $size={20}>$</Glyph></Tool>
          <Drop w={18} />
          <Tool $w={40} $bright><Glyph $size={21}>%</Glyph></Tool>
          <Tool $w={24} $bright aria-label="Comma style">
            <svg width="12" height="18" viewBox="0 0 12 18" fill="#e0e0e0"><path d="M6 0c4 0 6 3 5 7-1 5-4 9-8 11l-1-1c3-2 4-4 4-7C-1 10-1 0 6 0z" /></svg>
          </Tool>
          <Rule />
          <Tool $w={26} $bright aria-label="Increase decimal"><DecimalIcon /></Tool>
          <Tool $w={37} $bright aria-label="Decrease decimal"><DecimalIcon less /></Tool>
        </ToolRow>
      </Stack>
    </RibbonGroup>
    <RibbonGroup label="Styles" w={245} pad={4}>
      <Big w={104} icon={<CondIcon />} a="Conditional" b="Formatting" drop />
      <Big w={66} icon={<TableIcon />} a="Format as" b="Table" drop />
      <Big w={64} icon={<StylesIcon />} a="Cell" b="Styles" drop />
    </RibbonGroup>
    <RibbonGroup label="Cells" w={180} pad={9}>
      <Big w={54} icon={<InsertIcon />} a="Insert" drop />
      <Big w={54} icon={<DeleteIcon />} a="Delete" drop />
      <Big w={54} icon={<FormatIcon />} a="Format" drop />
    </RibbonGroup>
    <RibbonGroup label="Editing" w={196} pad={8}>
      <Stack $w={62} $top={3}>
        <ToolRow $h={32}><Tool $w={34} $bright aria-label="AutoSum"><Stroke w={18} h={20} d="M17 4V1H2l8 9-8 9h15v-3" /></Tool><Drop w={26} /></ToolRow>
        <ToolRow $h={32}>
          <Tool $w={34} aria-label="Fill">
            <svg width="20" height="18" viewBox="0 0 20 18" fill="none"><path d="M1 1h18v16H1zM1 3h18" stroke="#d0d0d0" strokeWidth="1.500" /><path d="M10 5v9M6 10l4 4 4-4" stroke="#3f8fd2" strokeWidth="1.600" /></svg>
          </Tool>
          <Drop w={10} />
        </ToolRow>
        <ToolRow $h={32}>
          <Tool $w={34} aria-label="Clear">
            <svg width="20" height="20" viewBox="0 0 20 20"><path d="M1 13l5-6 7 6-5 6z" fill="#b43fc0" /><path d="M13 1l6 6-11 12-7-6z" fill="none" stroke="#d88fe0" strokeWidth="1.400" /></svg>
          </Tool>
          <Drop w={10} />
        </ToolRow>
      </Stack>
      <Big w={58} icon={<SortIcon />} a="Sort &" b="Filter" drop />
      <Big w={58} icon={<FindIcon />} a="Find &" b="Select" drop />
    </RibbonGroup>
    <RibbonGroup label="Add-ins" w={77}>
      <Big w={77} icon={<AddinsIcon />} a="Add-ins" />
    </RibbonGroup>
    <RibbonGroup label="Adobe Acrobat" w={138}>
      <Big w={138} icon={<AdobeIcon />} a="Create and Share" b="Adobe PDF" />
    </RibbonGroup>
    <RibbonEnd><button aria-label="Collapse ribbon"><Chevron s={14} w={1.2} /></button></RibbonEnd>
  </Ribbon>
);

const Sheet = () => (
  <SheetClip>
    <Grid>
      <colgroup>
        <col style={{ width: 60 }} />
        {columns.map(([name, w]) => <col key={name} style={{ width: w }} />)}
        <col />
      </colgroup>
      <thead>
        <tr>
          <Corner><svg width="20" height="18" viewBox="0 0 20 18" fill="#5e5e5e"><path d="M17 2v15H2z" /></svg></Corner>
          {columns.map(([name]) => <ColHead key={name} scope="col" $on={name === "A"}>{name}</ColHead>)}
          <ColHead />
        </tr>
      </thead>
      <tbody>
        <tr>
          <RowHead scope="row">1</RowHead>
          {allCols.map((c) => <Cell key={c} $frozen><CellText>{headings[c]}</CellText></Cell>)}
        </tr>
        {rows.map((r, i) => {
          const on = firstRow + i === activeRow;
          return (
            <tr key={i}>
              <RowHead scope="row" $on={on}>{firstRow + i}</RowHead>
              {allCols.map((c) => (
                <Cell key={c} $active={on && c === 0}>
                  <CellText>{r[c]}</CellText>
                  {on && c === 0 && <FillHandle />}
                </Cell>
              ))}
            </tr>
          );
        })}
      </tbody>
    </Grid>
  </SheetClip>
);

export default function App() {
  return (
    <Window>
      <GlobalStyle />
      <TitleBar>
        <QuickAccess>
          <ExcelLogo s={20} />
          <QuickButton $w={60} aria-label="Save"><Stroke w={20} h={20} d="M1 1h15l3 3v15H1zM5 1v6h10V1M5 19v-8h10v8" /></QuickButton>
          <QuickButton $w={10} aria-label="Undo"><Stroke w={19} h={20} d="M1 1v8h8M1.500 8.500C6 2 13 1 16 4c5 5-1 9-7 15" sw={1.6} /></QuickButton>
          <QuickButton $w={34} aria-label="Undo list"><Chevron /></QuickButton>
          <QuickButton $w={18} aria-label="Redo"><Stroke w={19} h={20} d="M18 1v8h-8M17.500 8.500C13 2 6 1 3 4c-5 5 1 9 7 15" sw={1.6} /></QuickButton>
          <QuickButton $w={24} aria-label="Redo list"><Chevron /></QuickButton>
          <QuickButton $w={28} aria-label="Customize toolbar"><Stroke w={10} h={10} d="M0 1h10M1.500 4.500L5 8l3.500-3.500" /></QuickButton>
          <DocTitle>{"All Listings 0612  -  Excel"}</DocTitle>
        </QuickAccess>
        <SearchBox>
          <Magnifier s={19} c="#6a6a6a" />
          <SearchInput placeholder="Search" aria-label="Search" />
        </SearchBox>
        <WindowControls>
          <Avatar>WA</Avatar>
          <ControlButton aria-label="Minimize"><Stroke w={12} h={12} d="M0 5.500h12" sw={1} color="#8a8a8a" /></ControlButton>
          <ControlButton aria-label="Restore"><Stroke w={13} h={13} d="M1 3.500h9v9H1zM3.500 1h7q2 0 2 2v7" sw={1.2} color="#8a8a8a" /></ControlButton>
          <ControlButton aria-label="Close"><Stroke w={13} h={13} d="M0 0l13 13M13 0L0 13" sw={1.2} color="#8a8a8a" /></ControlButton>
        </WindowControls>
      </TitleBar>
      <TabRow>
        {tabs.map((t) => <RibbonTab key={t} $active={t === "Home"}><span>{t}</span></RibbonTab>)}
        <ShareButton>
          <Stroke w={15} h={16} d="M6 4H1v11h12v-4M4 10c0-4 3-5 6-5V1l4 5-4 4V8c-3 0-4 0-6 2z" sw={1.3} />
          Share
          <Chevron />
        </ShareButton>
      </TabRow>
      <RibbonBar />
      <FormulaRow>
        <FieldBox $w={128}>
          <FieldInput aria-label="Name box" defaultValue="A157579" />
          <Chevron s={14} w={1} />
        </FieldBox>
        <DotsHolder $w={24}><Dots /></DotsHolder>
        <FieldBox $w={92}>
          <Stroke w={18} h={16} d="M1 0l15 16M16 0L1 16" color="#7a7a7a" sw={1.3} />
          <Stroke w={20} h={16} d="M0 9l6 6L19 1" color="#7a7a7a" sw={1.3} />
          <Glyph $size={23} $serif $italic>fx</Glyph>
        </FieldBox>
        <DotsHolder $w={5} />
        <FieldBox>
          <FieldInput aria-label="Formula bar" />
          <Chevron s={14} w={1} />
        </FieldBox>
      </FormulaRow>
      <Workspace>
        <Sheet />
        <VScroll>
          <ArrowButton aria-label="Scroll up"><Triangle d="M6 1l5 9H1z" /></ArrowButton>
          <VTrack><VThumb /></VTrack>
          <ArrowButton aria-label="Scroll down"><Triangle d="M6 11l5-9H1z" /></ArrowButton>
        </VScroll>
        <PasteSpecial />
      </Workspace>
      <SheetTabs>
        <NavButton $w={70} aria-label="Previous sheet"><Stroke w={8} h={12} d="M7 1L1 6l6 5" /></NavButton>
        <NavButton $w={14} aria-label="Next sheet"><Stroke w={8} h={12} d="M1 1l6 5-6 5" /></NavButton>
        <ActiveSheet><span>All listing</span></ActiveSheet>
        <SheetTab>Removed</SheetTab>
        <SheetTab>Deleted or EOL</SheetTab>
        <SheetTab>Newly added</SheetTab>
        <AddSheet aria-label="New sheet"><Stroke w={15} h={15} d="M7.500 0v15M0 7.500h15" /></AddSheet>
        <Spacer />
        <DotsHolder $w={42}><Dots /></DotsHolder>
        <HScroll>
          <ArrowButton aria-label="Scroll left"><Triangle d="M1 6l9-5v10z" /></ArrowButton>
          <HTrack><HThumb /></HTrack>
          <ArrowButton aria-label="Scroll right"><Triangle d="M11 6L2 1v10z" /></ArrowButton>
        </HScroll>
      </SheetTabs>
      <StatusBar>
        Select destination and press ENTER or choose Paste
        <Spacer />
        <ViewButtons>
          <ViewButton $on aria-label="Normal view"><Stroke w={18} h={17} d="M1 1h16v15H1zM1 6h16M1 11h16M6.500 1v15M11.500 1v15" sw={1.6} /></ViewButton>
          <ViewButton aria-label="Page layout view"><Stroke w={18} h={17} d="M1 1h16v15H1zM5 4h8v9H5zM6 6.500h6M6 8.500h6M6 10.500h6" sw={1.5} /></ViewButton>
          <ViewButton aria-label="Page break view"><Stroke w={18} h={17} d="M1 1h16v15H1zM1 10h11V1M6.500 1v9" sw={1.6} /></ViewButton>
        </ViewButtons>
        <ZoomStep aria-label="Zoom out"><Stroke w={10} h={10} d="M0 5h10" sw={1.2} /></ZoomStep>
        <ZoomSlider type="range" min="0" max="100" defaultValue="51" aria-label="Zoom" />
        <ZoomStep aria-label="Zoom in"><Stroke w={10} h={10} d="M0 5h10M5 0v10" sw={1.2} /></ZoomStep>
        <ZoomValue>100%</ZoomValue>
      </StatusBar>
      <Taskbar>
        <StartButton aria-label="Start">
          <svg width="20" height="20" viewBox="0 0 20 20" fill="#fff"><path d="M0 3l8-1.200v7.700H0zM9 1.600L20 0v9.500H9zM0 10.500h8v7.700L0 17zM9 10.500h11V20L9 18.400z" /></svg>
        </StartButton>
        <TaskSearch>
          <Magnifier s={21} c="#d8d8d8" />
          <TaskInput placeholder="Type here to search" aria-label="Type here to search" />
          <Sparkles />
        </TaskSearch>
        <TaskApps>
          <TaskApp aria-label="Task view"><Stroke w={21} h={20} d="M1 0v3.500h12V0M1 20v-3.500h12V20M1 6h12v8H1zM19 0v4M19 10v10M17.500 7h3" color="#e8e8e8" sw={1.3} /></TaskApp>
          <TaskApp aria-label="Copilot"><Copilot /></TaskApp>
          <TaskApp aria-label="Edge"><Edge /></TaskApp>
          <TaskApp aria-label="File Explorer" $open><Explorer /></TaskApp>
          <TaskApp aria-label="Store"><Store /></TaskApp>
          <TaskApp aria-label="Outlook" $open><Outlook /></TaskApp>
          <TaskApp aria-label="Zoom" $open><Zoom /></TaskApp>
          <TaskApp aria-label="Chrome profile 1" $open><Chrome badge="a" /></TaskApp>
          <TaskApp aria-label="Chrome profile 2" $open><Chrome badge="b" /></TaskApp>
          <TaskApp aria-label="Chrome profile 3" $open><Chrome badge="c" /></TaskApp>
          <TaskApp aria-label="Excel" $open $on><ExcelLogo s={30} back={false} /></TaskApp>
          <TaskApp aria-label="FileZilla"><FileZilla /></TaskApp>
          <TaskApp aria-label="Calculator" $open><Calculator /></TaskApp>
          <TaskApp aria-label="Utility" $open><Hex /></TaskApp>
        </TaskApps>
        <Tray>
          <Weather>
            <svg width="32" height="28" viewBox="0 0 32 28">
              <path d="M7 26c-9 0-9-11-1-12C7 5 18 3 21 11c9-1 13 15 3 15z" fill="#5f6478" />
              <circle cx="24" cy="8" r="7.500" fill="#6e2630" />
              <BadgeText $s={11} x="24" y="12">1</BadgeText>
            </svg>
            {"24°C  Cloudy"}
          </Weather>
          <TrayIcon $w={36} aria-label="Show hidden icons"><Stroke w={17} h={10} d="M1 9l7.500-7.500L16 9" color="#f0f0f0" /></TrayIcon>
          <TrayIcon $w={27} aria-label="Display"><Stroke w={21} h={18} d="M5 1h15v12H3V6M7 17h9M11.500 13v4M1 1h3v4H1zM2.500 5v3" color="#f0f0f0" /></TrayIcon>
          <TrayIcon $w={34} aria-label="Camera"><Stroke w={16} h={20} d="M2 5h7q2 0 2 2v6q0 2-2 2H2Q1 15 1 13V7q0-2 1-2zM11 9l4-2v6l-4-2M2 2q5-2 9 0M2 18q5 2 9 0" color="#f0f0f0" /></TrayIcon>
          <TrayIcon $w={26} aria-label="Battery"><svg width="21" height="16" viewBox="0 0 21 16"><path d="M5 4h14v10H5z" fill="#f0f0f0" stroke="#f0f0f0" /><path d="M20 7v4M1 1v3h4V1M3 4v6M1 0v2M5 0v2" stroke="#f0f0f0" strokeWidth="1.400" fill="none" /></svg></TrayIcon>
          <TrayIcon $w={30} aria-label="Volume muted"><Stroke w={20} h={14} d="M1 4.500h2L7 1v12L3 9.500H1zM12 4l7 6M19 4l-7 6" color="#f0f0f0" /></TrayIcon>
          <Clock>1:55 PM<br />7/15/2025</Clock>
          <Notify aria-label="6 new notifications">
            <svg width="34" height="34" viewBox="0 0 34 34">
              <path d="M2 4h20v16h-8l-4 4v-4H2z" fill="#fff" />
              <path d="M5 8h14M5 12h14M5 16h10" stroke="#1b1c2c" strokeWidth="1.400" />
              <circle cx="21" cy="22" r="10" fill="#33343c" stroke="#8a8a8a" />
              <BadgeText $s={14} x="21" y="27">6</BadgeText>
            </svg>
          </Notify>
        </Tray>
      </Taskbar>
    </Window>
  );
}
